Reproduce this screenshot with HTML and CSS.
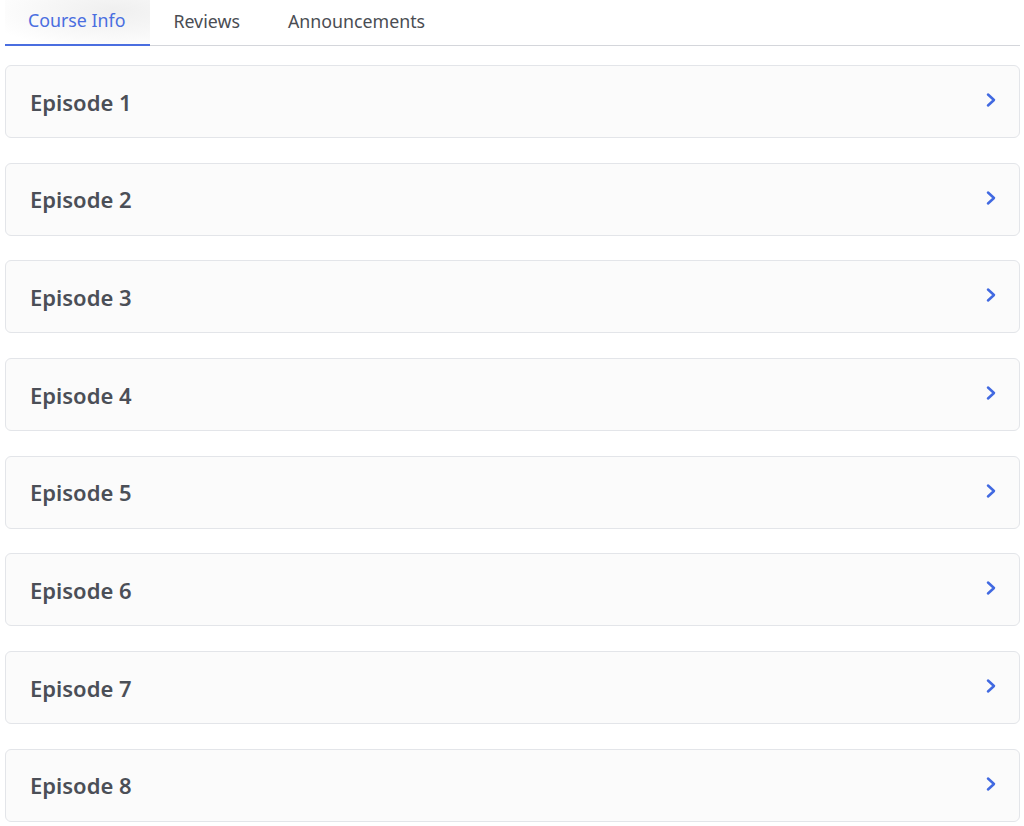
FILE: index.html
```html
<!DOCTYPE html>
<html>
<head>
  <meta charset="utf-8">
  <title>Course</title>
  <link rel="stylesheet" href="styles.css">
</head>
<body>
  <nav class="tabs">
    <a class="tab active">Course Info</a>
    <a class="tab">Reviews</a>
    <a class="tab">Announcements</a>
  </nav>

  <section class="episodes">
    <div class="episode"><span>Episode 1</span><svg class="chevron" viewBox="0 0 14 16"><path d="M4 2.5l6 5.5-6 5.5"/></svg></div>
    <div class="episode"><span>Episode 2</span><svg class="chevron" viewBox="0 0 14 16"><path d="M4 2.5l6 5.5-6 5.5"/></svg></div>
    <div class="episode"><span>Episode 3</span><svg class="chevron" viewBox="0 0 14 16"><path d="M4 2.5l6 5.5-6 5.5"/></svg></div>
    <div class="episode"><span>Episode 4</span><svg class="chevron" viewBox="0 0 14 16"><path d="M4 2.5l6 5.5-6 5.5"/></svg></div>
    <div class="episode"><span>Episode 5</span><svg class="chevron" viewBox="0 0 14 16"><path d="M4 2.5l6 5.5-6 5.5"/></svg></div>
    <div class="episode"><span>Episode 6</span><svg class="chevron" viewBox="0 0 14 16"><path d="M4 2.5l6 5.5-6 5.5"/></svg></div>
    <div class="episode"><span>Episode 7</span><svg class="chevron" viewBox="0 0 14 16"><path d="M4 2.5l6 5.5-6 5.5"/></svg></div>
    <div class="episode"><span>Episode 8</span><svg class="chevron" viewBox="0 0 14 16"><path d="M4 2.5l6 5.5-6 5.5"/></svg></div>
  </section>
</body>
</html>
```

FILE: styles.css
```css
body {
  margin: 0;
  padding: 0 4px 0 5px;
  background: #ffffff;
  font-family: "Noto Sans", "Open Sans", sans-serif;
}

.tabs {
  display: flex;
  height: 45px;
  border-bottom: 1px solid #d4d6db;
}

.tab {
  display: flex;
  align-items: center;
  padding: 0 25px 4px 23px;
  font-size: 17.8px;
  color: #4a4d53;
  cursor: pointer;
}

.tab.active {
  color: #4a6ee0;
  border-bottom: 2px solid #4a6ee0;
  margin-bottom: -1px;
  background: radial-gradient(ellipse at 75% 25%, #efefef 0%, #f6f6f6 40%, #ffffff 85%);
}

.episodes {
  display: flex;
  flex-direction: column;
  gap: 24.7px;
  padding-top: 19px;
}

.episode {
  display: flex;
  align-items: center;
  justify-content: space-between;
  height: 71px;
  padding: 0 21px 0 24px;
  background: #fbfbfb;
  border: 1px solid #e3e5e9;
  border-radius: 6px;
}

.episode span {
  font-size: 22px;
  font-weight: 600;
  color: #4b4f57;
}

.chevron {
  width: 14px;
  height: 16px;
  margin-top: -3px;
  fill: none;
  stroke: #4169e1;
  stroke-width: 2.5;
  stroke-linecap: round;
  stroke-linejoin: round;
}
```
